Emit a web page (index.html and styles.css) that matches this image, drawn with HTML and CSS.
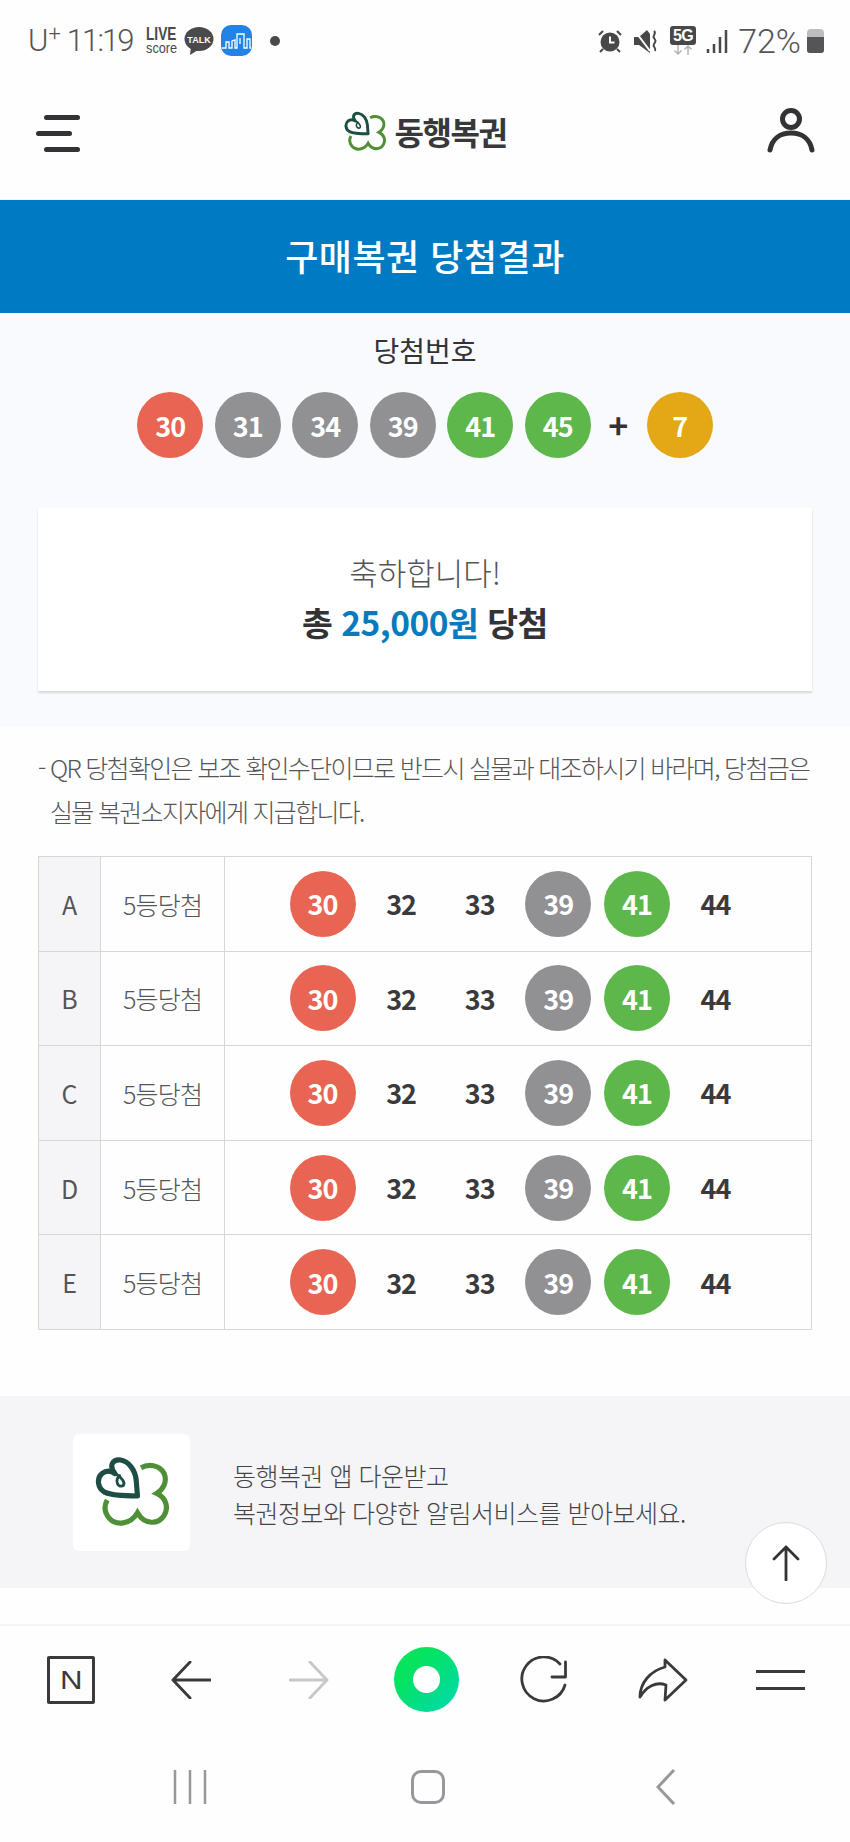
FILE: index.html
```html
<!DOCTYPE html>
<html lang="ko">
<head>
  <meta charset="UTF-8" />
  <meta name="viewport" content="width=device-width, initial-scale=1" />
  <title>구매복권 당첨결과</title>
  <link rel="stylesheet" href="styles.css">
</head>
<body>
  <div class="page">
    <!-- phone status bar -->
    <div class="status">
      <div class="status-left">
        <span class="carrier">U<sup>+</sup></span>
        <span class="clock">11:19</span>
        <span class="live"><b>LIVE</b><i>score</i></span>
        <svg class="talk" width="30" height="28" viewBox="0 0 30 28"><ellipse cx="15" cy="12" rx="14.5" ry="12" fill="#4a4a4c"/><path d="M7 20l-1 8 8-5z" fill="#4a4a4c"/><text x="15" y="16" class="talk-text" text-anchor="middle">TALK</text></svg>
        <svg class="city" width="31" height="31" viewBox="0 0 31 31"><rect width="31" height="31" rx="10" fill="#2283e6"/><path d="M1 23h4v-6h3v6h3v-7l3-1v8h2V9h7v14h3V14h3v9h1M19 13v6" fill="none" stroke="#fff" stroke-width="1.3"/></svg>
        <span class="dot"></span>
      </div>
      <div class="status-right">
        <svg width="24" height="24" viewBox="0 0 24 24"><circle cx="12" cy="13" r="9.5" fill="#48484a"/><path d="M12 7.500v6h4.500" fill="none" stroke="#fff" stroke-width="2"/><path d="M1 6l4-4M23 6l-4-4M5 20l-3 3M19 20l3 3" stroke="#48484a" stroke-width="2"/></svg>
        <svg class="mute" width="24" height="24" viewBox="0 0 24 24"><path d="M0 8h5l8-7 3 4v19L5 16H0z" fill="#48484a"/><path d="M1 2l15 20" stroke="#fff" stroke-width="2"/><path d="M20 2c3 3-2 4 0 7s2 3 0 6 3 4 1 7" fill="none" stroke="#48484a" stroke-width="2"/></svg>
        <span class="net"><b>5G</b><svg width="22" height="10" viewBox="0 0 22 10"><path d="M6 0v9M2.500 5.500L6 9l3.500-3.500M16 10V1M12.500 4.500L16 1l3.500 3.500" fill="none" stroke="#b4b4b6" stroke-width="1.500"/></svg></span>
        <svg class="signal" width="22" height="24" viewBox="0 0 22 24"><path d="M2 24v-4M8 24v-9M14 24V8M20 24V1" stroke="#48484a" stroke-width="2.500"/></svg>
        <span class="batt-text">72%</span>
        <span class="battery"><span class="battery-fill"></span></span>
      </div>
    </div>

    <header class="top">
      <div class="burger"><span></span><span class="short"></span><span></span></div>
      <div class="brand">
        <svg width="42" height="41" viewBox="100 100 230 215"><use href="#logo"/></svg>
        <span>동행복권</span>
      </div>
      <svg class="user" width="48" height="46" viewBox="0 0 48 46"><circle cx="24" cy="12" r="8.500" fill="none" stroke="#333336" stroke-width="5"/><path d="M3 43C5 32 13 26 24 26S43 32 45 43" fill="none" stroke="#333336" stroke-width="5" stroke-linecap="round"/></svg>
    </header>

    <h1 class="banner">구매복권 당첨결과</h1>

    <section class="result">
      <h2>당첨번호</h2>
      <div class="balls">
        <span class="ball red">30</span>
        <span class="ball gray">31</span>
        <span class="ball gray">34</span>
        <span class="ball gray">39</span>
        <span class="ball green">41</span>
        <span class="ball green">45</span>
        <span class="plus">+</span>
        <span class="ball yellow">7</span>
      </div>
      <div class="card">
        <p class="congrats">축하합니다!</p>
        <p class="total">총 <em>25,000원</em> 당첨</p>
      </div>
    </section>

    <p class="notice">- QR 당첨확인은 보조 확인수단이므로 반드시 실물과 대조하시기 바라며, 당첨금은<br>실물 복권소지자에게 지급합니다.</p>

    <table class="games">
      <tr>
        <th>A</th><td class="rank">5등당첨</td>
        <td><div class="row"><span class="ball red">30</span><span class="ball">32</span><span class="ball">33</span><span class="ball gray">39</span><span class="ball green">41</span><span class="ball">44</span></div></td>
      </tr>
      <tr>
        <th>B</th><td class="rank">5등당첨</td>
        <td><div class="row"><span class="ball red">30</span><span class="ball">32</span><span class="ball">33</span><span class="ball gray">39</span><span class="ball green">41</span><span class="ball">44</span></div></td>
      </tr>
      <tr>
        <th>C</th><td class="rank">5등당첨</td>
        <td><div class="row"><span class="ball red">30</span><span class="ball">32</span><span class="ball">33</span><span class="ball gray">39</span><span class="ball green">41</span><span class="ball">44</span></div></td>
      </tr>
      <tr>
        <th>D</th><td class="rank">5등당첨</td>
        <td><div class="row"><span class="ball red">30</span><span class="ball">32</span><span class="ball">33</span><span class="ball gray">39</span><span class="ball green">41</span><span class="ball">44</span></div></td>
      </tr>
      <tr>
        <th>E</th><td class="rank">5등당첨</td>
        <td><div class="row"><span class="ball red">30</span><span class="ball">32</span><span class="ball">33</span><span class="ball gray">39</span><span class="ball green">41</span><span class="ball">44</span></div></td>
      </tr>
    </table>

    <div class="promo">
      <div class="promo-icon">
        <svg width="74" height="70" viewBox="100 100 230 215">
          <g id="logo" fill="none" stroke-width="16">
            <path stroke="#4f8f35" d="M243 132C265 120 300 122 315 150C325 175 312 200 292 212C320 225 330 255 315 280C298 308 255 312 232 272C210 310 165 312 145 290C128 270 128 250 138 232"/>
            <path stroke="#1d4d43" stroke-linejoin="round" d="M232 220C190 220 150 218 130 208C108 196 104 165 122 150C135 140 150 142 162 150C142 125 155 105 180 108C205 112 225 140 228 170Z"/>
            <path stroke="#1d4d43" stroke-width="9" d="M150 142C165 150 188 165 190 180C190 192 175 192 170 182C165 172 170 160 180 155"/>
          </g>
        </svg>
      </div>
      <p>동행복권 앱 다운받고<br>복권정보와 다양한 알림서비스를 받아보세요.</p>
    </div>

    <!-- floating scroll to top -->
    <button class="to-top" aria-label="top">
      <svg width="30" height="36" viewBox="0 0 30 36"><path d="M15 35V2M3 14L15 2l12 12" fill="none" stroke="#333336" stroke-width="2.800" stroke-linecap="round" stroke-linejoin="round"/></svg>
    </button>

    <div class="spacer"></div>

    <nav class="browser">
      <span class="n-box"><span>N</span></span>
      <svg class="arrow" width="40" height="38" viewBox="0 0 42 40"><path d="M41 20H3M20 1L2 20l18 19" fill="none" stroke="#3a3a3c" stroke-width="3" stroke-linecap="round" stroke-linejoin="round"/></svg>
      <svg class="arrow" width="40" height="38" viewBox="0 0 42 40"><path d="M1 20h38M22 1l18 19-18 19" fill="none" stroke="#c8c8cc" stroke-width="3" stroke-linecap="round" stroke-linejoin="round"/></svg>
      <span class="home-dot"></span>
      <svg width="48" height="48" viewBox="0 0 48 48"><path d="M46 29A22 22 0 1 1 41 8" fill="none" stroke="#3a3a3c" stroke-width="2.800" stroke-linecap="round"/><path d="M46.500 6v15H33" fill="none" stroke="#3a3a3c" stroke-width="2.800" stroke-linecap="round" stroke-linejoin="round"/></svg>
      <svg class="share" width="50" height="44" viewBox="0 0 50 44"><path d="M27 2L48 22 27 42 28 27C18 23 8 29 2 39 2 25 12 13 27 9z" fill="none" stroke="#3a3a3c" stroke-width="2.800" stroke-linejoin="round"/></svg>
      <div class="menu"><span></span><span></span></div>
    </nav>

    <nav class="system">
      <svg width="34" height="34" viewBox="0 0 34 34"><path d="M2 0v34M17 0v34M32 0v34" stroke="#98989c" stroke-width="2.500"/></svg>
      <span class="sys-home"></span>
      <svg width="20" height="36" viewBox="0 0 20 36"><path d="M18 1L2 18l16 17" fill="none" stroke="#98989c" stroke-width="3"/></svg>
    </nav>
  </div>
</body>
</html>
```

FILE: styles.css
```css
* {
  box-sizing: border-box;
}
body {
  margin: 0;
  background: #fefefe;
  color: #333336;
  font-family: 'Noto Sans CJK KR', 'Noto Sans', sans-serif;
}
.page {
  position: relative;
  width: 850px;
  height: 1842px;
  overflow: hidden;
  display: flex;
  flex-direction: column;
}
h1, h2, p {
  margin: 0;
  font-weight: 400;
}

/* status bar */
.status {
  height: 75px;
  padding: 6px 26px 0 28px;
  display: flex;
  justify-content: space-between;
  align-items: center;
  color: #555557;
  font-family: Roboto, sans-serif;
  font-weight: 300;
}
.status-left, .status-right {
  display: flex;
  align-items: center;
}
.carrier {
  font-size: 31px;
  line-height: 34px;
  margin-right: 6px;
}
.carrier sup {
  font-size: 22px;
  line-height: 0;
  vertical-align: 10px;
}
.clock {
  font-size: 31px;
  line-height: 34px;
  letter-spacing: -1.900px;
  margin-right: 13px;
}
.live {
  display: flex;
  flex-direction: column;
  width: 38px;
  color: #4a4a4c;
}
.live b {
  font: 700 19px/14px 'Liberation Sans', sans-serif;
  transform: scaleX(0.72);
  transform-origin: left;
}
.live i {
  font: 400 15px/13px 'Liberation Sans', sans-serif;
  transform: scaleX(0.85);
  transform-origin: left;
}
.talk-text {
  fill: #fff;
  font: 700 9px 'Liberation Sans', sans-serif;
}
.city {
  margin: 0 0 0 7px;
}
.dot {
  width: 10px;
  height: 10px;
  border-radius: 50%;
  background: #4a4a4c;
  margin-left: 18px;
}
.status-right .mute {
  margin-left: 12px;
}
.net {
  display: flex;
  flex-direction: column;
  align-items: center;
  margin: 0 10px 0 12px;
}
.net b {
  width: 26px;
  height: 19px;
  background: #48484a;
  border-radius: 3px;
  color: #fff;
  font: 700 16px/19px 'Liberation Sans', sans-serif;
  text-align: center;
  letter-spacing: -0.500px;
}
.batt-text {
  font-size: 34px;
  line-height: 34px;
  margin: 0 6px 0 10px;
}
.battery {
  position: relative;
  width: 17px;
  height: 24px;
  background: #bdbdbf;
  border-radius: 4px 4px 3px 3px;
  overflow: hidden;
  display: flex;
  align-items: flex-end;
}
.battery-fill {
  width: 100%;
  height: 16px;
  background: #555557;
}

/* site header */
.top {
  height: 125px;
  padding: 0 35px 8px 36px;
  display: flex;
  align-items: center;
  justify-content: space-between;
  border-bottom: 1px solid #e4fbff;
}
.burger {
  width: 44px;
  display: flex;
  flex-direction: column;
  align-items: flex-end;
  gap: 11px;
}
.burger span {
  width: 36px;
  height: 5px;
  border-radius: 3px;
  background: #333336;
}
.burger .short {
  align-self: flex-start;
}
.brand {
  display: flex;
  align-items: center;
  gap: 9px;
  margin: 0 0 4px 3px;
  font-size: 32px;
  font-weight: 700;
  letter-spacing: -1.500px;
  color: #38383a;
}
.brand span {
  line-height: 40px;
}
.user {
  margin-bottom: 6px;
}
.banner {
  height: 113px;
  background: #007bc3;
  color: #fff;
  font-size: 36px;
  font-weight: 500;
  line-height: 111px;
  letter-spacing: 0.500px;
  text-align: center;
}

/* winning numbers */
.result {
  background: #f8fafe;
  padding: 20px 38px 36px;
  text-align: center;
}
.result h2 {
  font-size: 28px;
  font-weight: 400;
  line-height: 34px;
}
.balls {
  margin-top: 25px;
  display: flex;
  justify-content: center;
  align-items: center;
  gap: 11.500px;
}
.ball {
  width: 66px;
  height: 66px;
  border-radius: 50%;
  display: flex;
  align-items: center;
  justify-content: center;
  font-size: 27px;
  font-weight: 700;
  letter-spacing: -1px;
  color: #3a3a3c;
}
.ball.red, .ball.gray, .ball.green, .ball.yellow {
  color: #fff;
}
.red { background: #e96553; }
.gray { background: #919194; }
.green { background: #5db74a; }
.yellow { background: #e4a716; }
.plus {
  width: 32px;
  margin-right: 1px;
  text-align: center;
  font-size: 34px;
  font-weight: 700;
  line-height: 66px;
  color: #333336;
}
.card {
  margin-top: 50px;
  height: 183px;
  background: #fff;
  box-shadow: 0 2px 2px rgba(0,0,0,0.14);
  padding-top: 44px;
}
.congrats {
  font-size: 31px;
  font-weight: 300;
  line-height: 40px;
  color: #555557;
}
.total {
  margin-top: 9px;
  font-size: 33.500px;
  font-weight: 700;
  line-height: 42px;
  letter-spacing: -0.500px;
}
.total em {
  font-style: normal;
  color: #0a7abf;
}

.notice {
  margin: 18px 0 0 38px;
  padding-left: 12px;
  text-indent: -12px;
  font-size: 25px;
  font-weight: 300;
  line-height: 44px;
  letter-spacing: -1.680px;
  white-space: nowrap;
  color: #555557;
}

/* game table */
.games {
  margin: 23px 38px 0;
  width: 774px;
  table-layout: fixed;
  border-collapse: collapse;
  font-size: 25px;
}
.games th, .games td {
  height: 94.600px;
  padding: 0;
  border: 1px solid #d6d6dc;
  text-align: center;
}
.games th {
  width: 62px;
  background: #f5f5f8;
  font-weight: 400;
  color: #555557;
}
.games .rank {
  width: 124px;
  font-weight: 300;
  letter-spacing: -0.800px;
  color: #555557;
}
.row {
  display: flex;
  justify-content: center;
  gap: 12.600px;
  padding-left: 2px;
}

/* app promo */
.promo {
  margin-top: 66px;
  height: 192px;
  padding: 38px 0 0 73px;
  background: #f5f5f8;
  display: flex;
  align-items: flex-start;
  gap: 43px;
}
.promo-icon {
  width: 117px;
  height: 117px;
  border-radius: 6px;
  background: #fff;
  display: flex;
  align-items: center;
  justify-content: center;
}
.promo p {
  padding-top: 23px;
  font-size: 25px;
  font-weight: 300;
  line-height: 37px;
  letter-spacing: -0.500px;
  color: #444446;
}
.to-top {
  position: absolute;
  left: 745px;
  top: 1522px;
  width: 82px;
  height: 82px;
  padding: 0;
  border: 1px solid #dcdce0;
  border-radius: 50%;
  background: #fff;
  display: flex;
  align-items: center;
  justify-content: center;
}

.spacer {
  height: 36px;
}

/* browser toolbar and system keys */
.browser {
  height: 110px;
  padding: 0 12px;
  border-top: 2px solid #f4f4f6;
  display: grid;
  grid-template-columns: repeat(7, 118px);
  justify-items: center;
  align-items: center;
}
.n-box {
  width: 48px;
  height: 48px;
  border: 3px solid #3a3a3c;
  border-radius: 2px;
  text-align: center;
  font: 400 26px/42px 'Liberation Sans', sans-serif;
  color: #3a3a3c;
}
.n-box span {
  display: inline-block;
  transform: scaleX(1.2);
}
.arrow {
  margin-left: 4px;
}
.share {
  margin-left: 3px;
}
.home-dot {
  width: 65px;
  height: 65px;
  margin-left: 2px;
  border-radius: 50%;
  background: radial-gradient(circle, #fff 0 13px, transparent 14px), linear-gradient(135deg, #05e35f 30%, #00d8b4 100%);
}
.menu {
  width: 49px;
  margin-left: 2px;
  display: flex;
  flex-direction: column;
  gap: 14px;
}
.menu span {
  height: 3px;
  background: #3a3a3c;
}
.system {
  height: 107px;
  padding: 0 71px;
  display: grid;
  grid-template-columns: repeat(3, 238px);
  justify-items: center;
  align-items: center;
}
.sys-home {
  width: 34px;
  height: 34px;
  border: 3px solid #98989c;
  border-radius: 10px;
}
```
